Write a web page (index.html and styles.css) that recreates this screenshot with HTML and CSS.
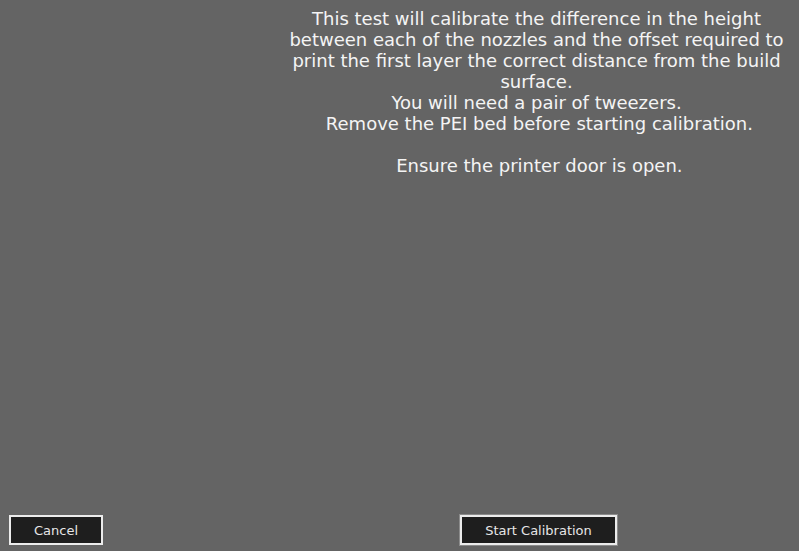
FILE: index.html
```html
<!DOCTYPE html>
<html>
<head>
<meta charset="utf-8">
<link rel="stylesheet" href="styles.css">
</head>
<body>
<div class="screen">
  <div class="side"></div>
  <div class="info">
    <p>This test will calibrate the difference in the height between each of the nozzles and the offset required to print the first layer the correct distance from the build surface.</p>
    <p>You will need a pair of tweezers.</p>
    <p>&nbsp;Remove the PEI bed before starting calibration.</p>
    <p class="gap">&nbsp;Ensure the printer door is open.</p>
  </div>
  <div class="left-actions">
    <button class="btn cancel">Cancel</button>
  </div>
  <div class="right-actions">
    <button class="btn start">Start Calibration</button>
  </div>
</div>
</body>
</html>
```
FILE: styles.css
```css
html, body {
  margin: 0;
  padding: 0;
  background: #646464;
}
.screen {
  width: 799px;
  height: 551px;
  display: grid;
  grid-template-columns: 274px 525px;
  grid-template-rows: 1fr auto;
  font-family: "DejaVu Sans", sans-serif;
  color: #f4f4f4;
  box-sizing: border-box;
  padding-bottom: 6px;
}
.info {
  text-align: center;
  font-size: 18px;
  line-height: 21px;
  padding-top: 8px;
}
.info p {
  margin: 0;
}
.info .gap {
  margin-top: 21px;
}
.left-actions {
  padding-left: 9px;
}
.right-actions {
  display: flex;
  justify-content: center;
  padding-left: 4px;
}
.btn {
  font-family: "DejaVu Sans", sans-serif;
  font-size: 13px;
  color: #e6e6e6;
  background: #1e1e1e;
  border: 2px solid #ececec;
  height: 30px;
  padding: 0;
  margin: 0;
  box-sizing: border-box;
}
.cancel {
  width: 94px;
}
.start {
  width: 157px;
  box-shadow: 0 0 0 1px #8c8c8c;
}
```
